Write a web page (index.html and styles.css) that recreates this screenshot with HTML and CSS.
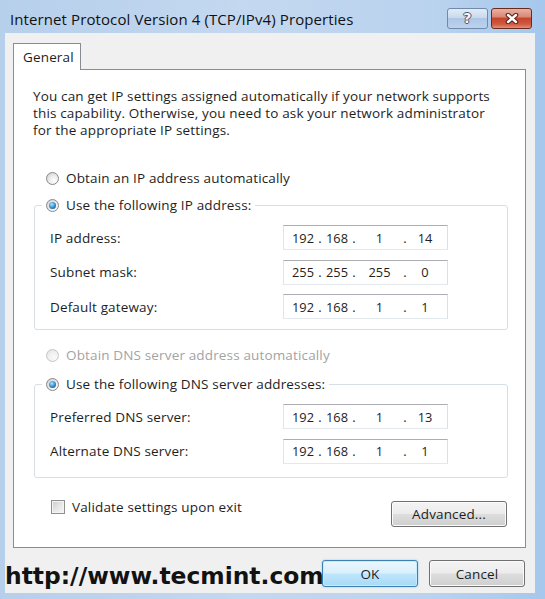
FILE: index.html
```html
<!DOCTYPE html>
<html>
<head>
<meta charset="utf-8">
<title>Internet Protocol Version 4 (TCP/IPv4) Properties</title>
<link rel="stylesheet" href="styles.css">
</head>
<body>
<div class="window">
  <div class="titlebar">
    <span class="title">Internet Protocol Version 4 (TCP/IPv4) Properties</span>
    <div class="caption-btns">
      <span class="cbtn help">?</span>
      <span class="cbtn close"><svg width="14" height="11" viewBox="0 0 14 11"><path d="M3 2 L11 9 M11 2 L3 9" stroke="#5a2218" stroke-width="4.6" stroke-linecap="round" fill="none"/><path d="M3 2 L11 9 M11 2 L3 9" stroke="#fff" stroke-width="2.4" stroke-linecap="round" fill="none"/></svg></span>
    </div>
  </div>
  <div class="client">
    <div class="tabs"><div class="tab">General</div></div>
    <div class="panel">
      <p class="intro">You can get IP settings assigned automatically if your network supports<br>this capability. Otherwise, you need to ask your network administrator<br>for the appropriate IP settings.</p>
      <div class="option opt-first"><span class="radio"></span><span>Obtain an IP address automatically</span></div>
      <fieldset class="group g-ip">
        <legend class="option"><span class="radio checked"></span><span>Use the following IP address:</span></legend>
        <div class="row"><span class="lbl">IP address:</span>
          <div class="ipbox"><span>192</span><span>.</span><span>168</span><span>.</span><span>1</span><span>.</span><span>14</span></div></div>
        <div class="row"><span class="lbl">Subnet mask:</span>
          <div class="ipbox"><span>255</span><span>.</span><span>255</span><span>.</span><span>255</span><span>.</span><span>0</span></div></div>
        <div class="row"><span class="lbl">Default gateway:</span>
          <div class="ipbox"><span>192</span><span>.</span><span>168</span><span>.</span><span>1</span><span>.</span><span>1</span></div></div>
      </fieldset>
      <div class="option opt-dns disabled"><span class="radio"></span><span>Obtain DNS server address automatically</span></div>
      <fieldset class="group g-dns">
        <legend class="option"><span class="radio checked"></span><span>Use the following DNS server addresses:</span></legend>
        <div class="row"><span class="lbl">Preferred DNS server:</span>
          <div class="ipbox"><span>192</span><span>.</span><span>168</span><span>.</span><span>1</span><span>.</span><span>13</span></div></div>
        <div class="row"><span class="lbl">Alternate DNS server:</span>
          <div class="ipbox"><span>192</span><span>.</span><span>168</span><span>.</span><span>1</span><span>.</span><span>1</span></div></div>
      </fieldset>
      <div class="bottom-row">
        <div class="option check-opt"><span class="checkbox"></span><span>Validate settings upon exit</span></div>
        <button class="btn btn-adv">Advanced...</button>
      </div>
    </div>
    <div class="dlg-btns">
      <button class="btn default">OK</button>
      <button class="btn">Cancel</button>
    </div>
  </div>
  <div class="watermark">http://www.tecmint.com</div>
</div>
</body>
</html>
```
FILE: styles.css
```css
body {
  margin: 0;
  font-family: "Open Sans", "Noto Sans", sans-serif;
  font-size: 13.5px;
  letter-spacing: 0.15px;
  color: #1e1e1e;
}
.window {
  position: relative;
  width: 545px;
  height: 599px;
  overflow: hidden;
  background: linear-gradient(90deg, #b6cfeb 0%, #c4d8f0 45%, #b9d2ee 80%, #a6c8ec 100%);
}
.titlebar {
  height: 33px;
  box-sizing: border-box;
  padding: 4px 13px 0 10px;
  display: flex;
  align-items: center;
}
.title {
  font-size: 15px;
  letter-spacing: 0.1px;
  color: #111;
}
.caption-btns {
  margin-left: auto;
  display: flex;
  gap: 3px;
}
.cbtn {
  width: 41px;
  height: 21px;
  box-sizing: border-box;
  border-radius: 3px;
  display: flex;
  align-items: center;
  justify-content: center;
}
.help {
  border: 1px solid #7189ab;
  background: linear-gradient(#e2ebf6 0%, #c9daee 45%, #aec7e5 50%, #bcd3ee 100%);
  color: #f4f7fb;
  font-family: "DejaVu Sans", sans-serif;
  font-weight: bold;
  font-size: 14px;
  line-height: 19px;
  text-shadow: 0 0 1px #3c4e69, 1px 0 0 #4a5d7a, -1px 0 0 #4a5d7a, 0 1px 0 #4a5d7a, 0 -1px 0 #4a5d7a;
}
.close {
  border: 1px solid #6b2a20;
  background: linear-gradient(#eab0a2 0%, #d98a77 40%, #c8452d 50%, #cf5a40 80%, #e1917a 100%);
}
.client {
  margin: 0 10px 0 5px;
  height: 560px;
  box-sizing: border-box;
  background: #f0f0f0;
  padding: 10px 9px 0 8px;
}
.tabs {
  display: flex;
  height: 26px;
}
.tab {
  position: relative;
  z-index: 1;
  width: 68px;
  height: 27px;
  box-sizing: border-box;
  border: 1px solid #898c95;
  border-bottom: none;
  background: #fff;
  padding-left: 9px;
  line-height: 26px;
}
.panel {
  height: 479px;
  box-sizing: border-box;
  border: 1px solid #898c95;
  background: #fff;
  padding: 18px 18px 0 19px;
}
.intro {
  margin: 0;
  line-height: 17px;
}
.option {
  display: flex;
  align-items: center;
  gap: 7px;
  height: 20px;
}
.radio {
  width: 13px;
  height: 13px;
  box-sizing: border-box;
  border-radius: 50%;
  border: 1px solid #8a8a8a;
  background: radial-gradient(circle at 65% 70%, #ffffff 0%, #ececec 45%, #c9c9c9 100%);
  display: inline-flex;
  align-items: center;
  justify-content: center;
  flex: none;
}
.radio.checked::after {
  content: "";
  width: 7px;
  height: 7px;
  border-radius: 50%;
  background: radial-gradient(circle at 40% 35%, #b8e3fb 0%, #4aa3dc 40%, #17548a 85%);
}
.disabled {
  color: #a3a3a3;
}
.disabled .radio {
  border-color: #c6c6c6;
  background: radial-gradient(circle at 65% 70%, #fafafa 0%, #f0f0f0 50%, #dedede 100%);
}
.opt-first {
  margin-top: 29px;
  margin-left: 13px;
}
.group {
  margin: 7px 0 0 1px;
  width: 474px;
  box-sizing: border-box;
  border: 1px solid #d5dfe5;
  border-radius: 3px;
  padding: 10px 0 10px 15px;
}
.group legend {
  padding: 0 4px;
  margin-left: -8px;
}
.g-dns {
  margin-top: 9px;
  padding-bottom: 13px;
}
.opt-dns {
  margin-top: 15px;
  margin-left: 13px;
}
.row {
  display: flex;
  align-items: center;
  height: 25px;
}
.row + .row {
  margin-top: 9.5px;
}
.lbl {
  width: 233px;
}
.ipbox {
  width: 165px;
  height: 25px;
  box-sizing: border-box;
  border: 1px solid;
  border-color: #abadb3 #dbdfe6 #e3e9ef #e2e3ea;
  display: grid;
  grid-template-columns: 30px 4px 30px 4px 47px 4px 36px;
  align-items: center;
  padding-left: 4px;
  text-align: center;
  font-size: 12.8px;
  letter-spacing: 0;
}
.bottom-row {
  display: flex;
  justify-content: space-between;
  align-items: flex-start;
  margin-top: 19px;
}
.check-opt {
  margin-left: 18px;
}
.checkbox {
  width: 14px;
  height: 14px;
  box-sizing: border-box;
  border: 1px solid #8f8f8f;
  background: linear-gradient(135deg, #cbcbcb 0%, #e6e6e6 50%, #f7f7f7 100%);
  box-shadow: inset 0 0 0 1px #f4f4f4;
}
.btn {
  font: inherit;
  letter-spacing: inherit;
  color: #1e1e1e;
  width: 96px;
  height: 27px;
  padding: 0;
  border: 1px solid #707070;
  border-radius: 3px;
  background: linear-gradient(#f4f4f4 0%, #ececec 48%, #dddddd 52%, #cfcfcf 100%);
  box-shadow: inset 0 0 0 1px #fbfbfb;
}
.btn-adv {
  width: 116px;
  height: 26px;
  margin-top: 4px;
}
.dlg-btns {
  display: flex;
  justify-content: flex-end;
  gap: 11px;
  margin-top: 12px;
  margin-right: 1px;
}
.btn.default {
  border-color: #3c7fb1;
  background: linear-gradient(#eaf6fd 0%, #d9f0fc 48%, #bee6fd 52%, #a7d9f5 100%);
  box-shadow: inset 0 0 0 1px #c5ecfd, 0 0 2px #7fc4ef;
}
.watermark {
  position: absolute;
  left: 5px;
  top: 561px;
  font-family: "DejaVu Sans", "Verdana", sans-serif;
  font-weight: bold;
  font-size: 23.4px;
  letter-spacing: 0;
  line-height: 30px;
  color: #121212;
}
```
